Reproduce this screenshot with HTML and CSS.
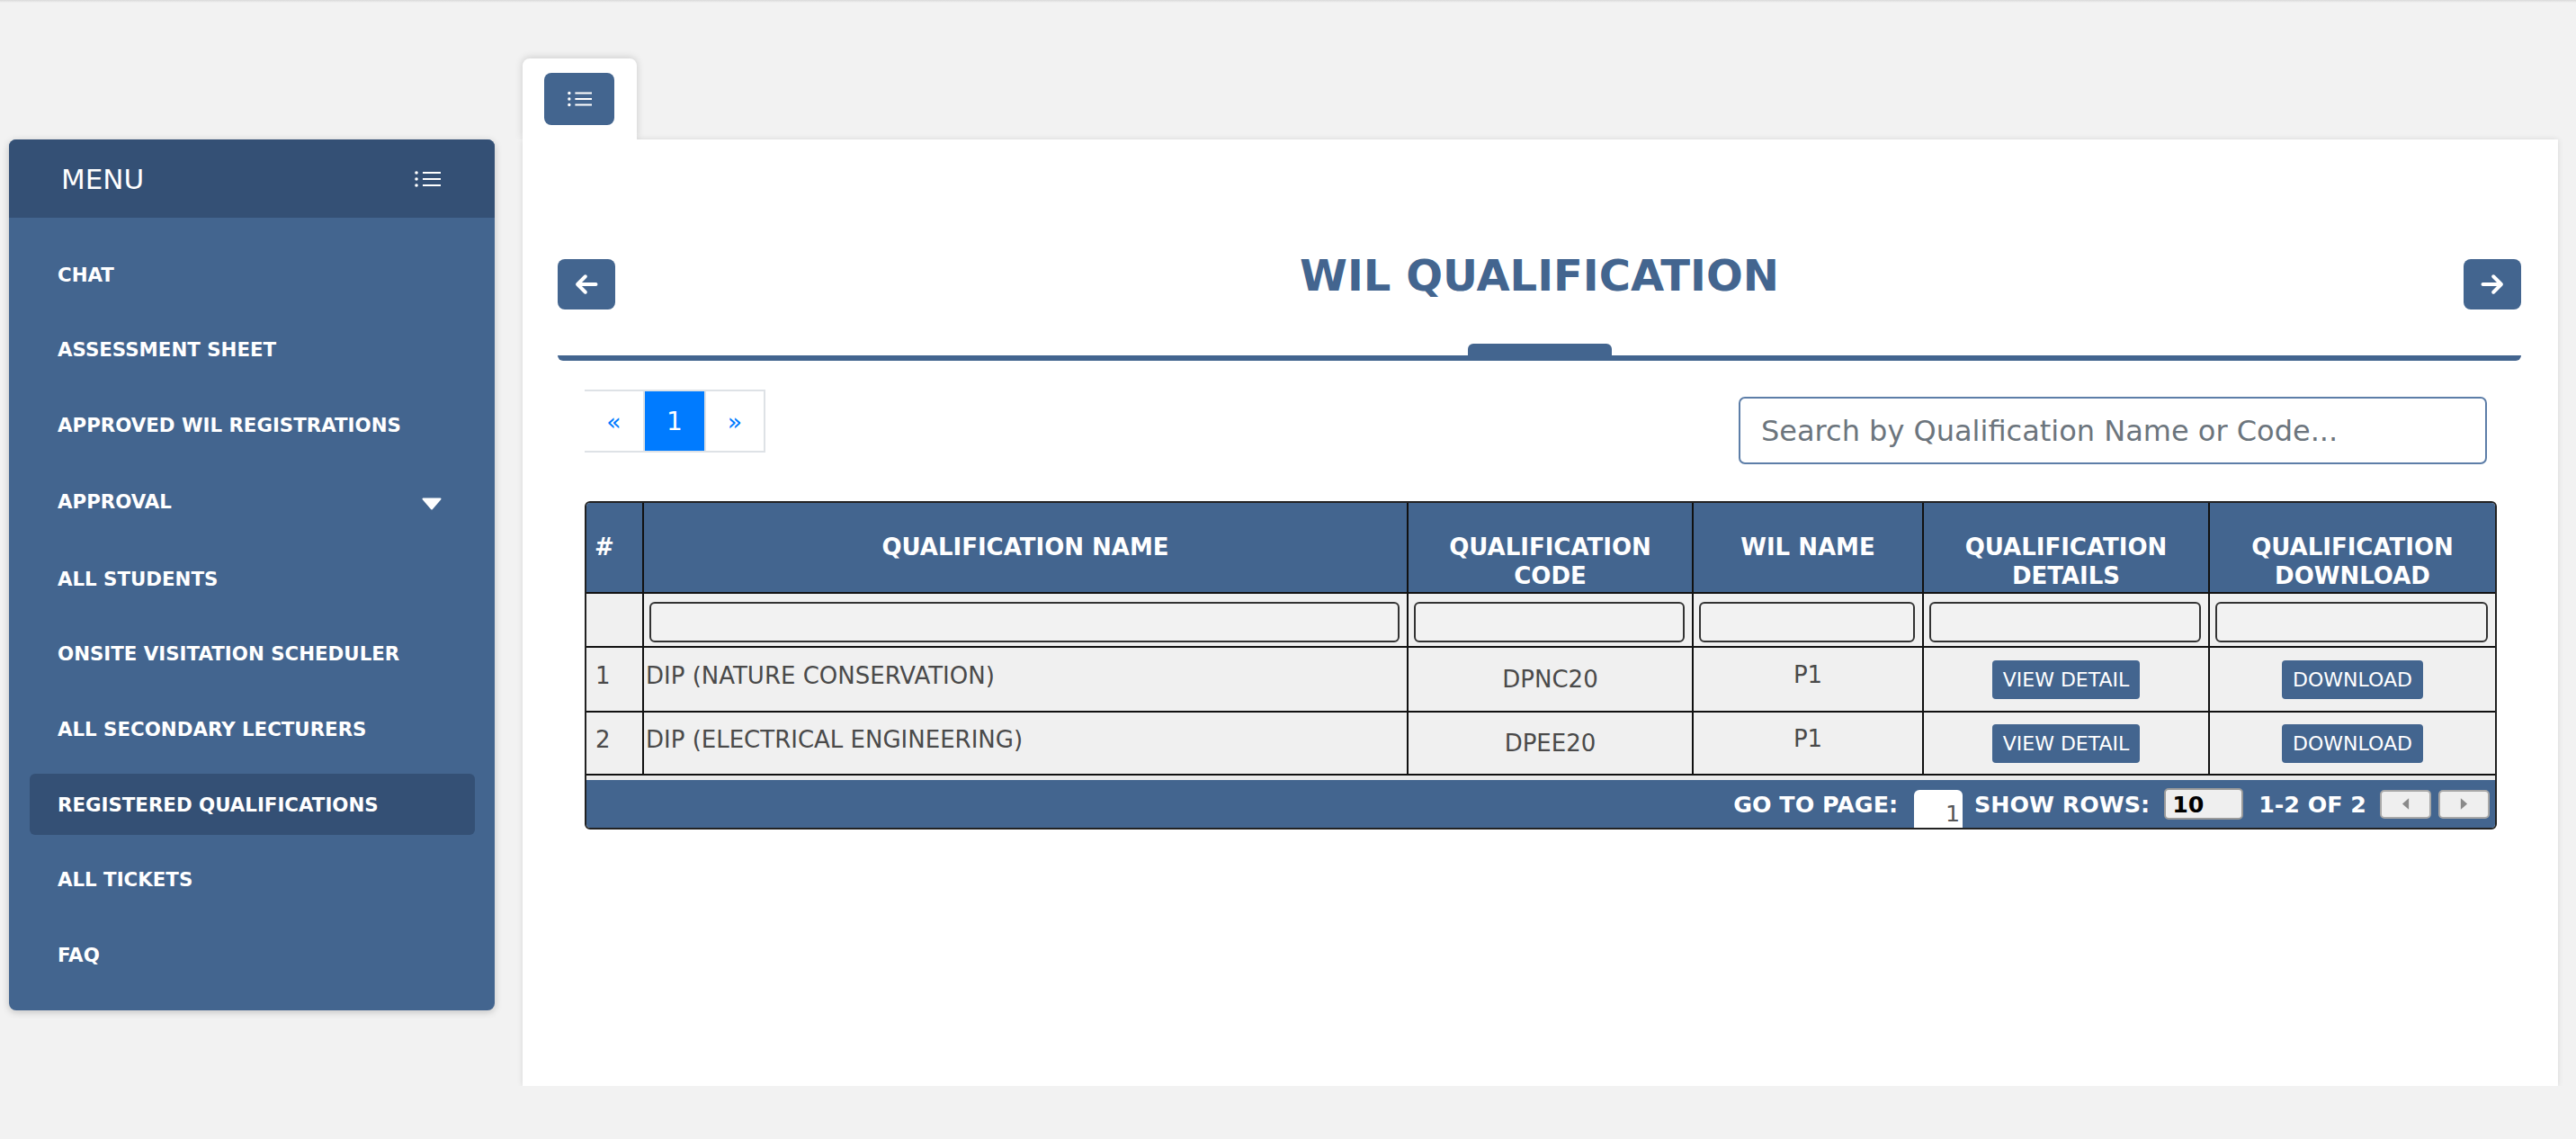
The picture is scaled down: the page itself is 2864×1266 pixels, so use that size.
FILE: index.html
```html
<!DOCTYPE html>
<html lang="en">
<head>
<meta charset="utf-8">
<title>WIL Qualification</title>
<link rel="stylesheet" href="styles.css">
</head>
<body>
<div class="topbar"></div>
<div class="layout">
  <aside class="sidebar">
    <div class="side-head">
      <span class="side-title">MENU</span>
      <svg class="list-icon" viewBox="0 0 29 18"><g fill="#fff"><circle cx="2" cy="2" r="1.8"/><circle cx="2" cy="9" r="1.8"/><circle cx="2" cy="16" r="1.8"/></g><path d="M9 2h20M9 9h20M9 16h20" stroke="#fff" stroke-width="2"/></svg>
    </div>
    <nav class="side-nav">
      <a class="nav-item">CHAT</a>
      <a class="nav-item">ASSESSMENT SHEET</a>
      <a class="nav-item">APPROVED WIL REGISTRATIONS</a>
      <a class="nav-item nav-item--drop">APPROVAL<svg class="caret" viewBox="0 0 24 14"><path d="M2.5 1.5h19L12 12.5z" fill="#fff" stroke="#fff" stroke-width="2" stroke-linejoin="round"/></svg></a>
      <a class="nav-item">ALL STUDENTS</a>
      <a class="nav-item">ONSITE VISITATION SCHEDULER</a>
      <a class="nav-item">ALL SECONDARY LECTURERS</a>
      <a class="nav-item is-active">REGISTERED QUALIFICATIONS</a>
      <a class="nav-item">ALL TICKETS</a>
      <a class="nav-item">FAQ</a>
    </nav>
  </aside>

  <main class="main">
    <div class="tab">
      <button class="tab-btn" type="button"><svg viewBox="0 0 29 18"><g fill="#fff"><circle cx="2" cy="2" r="1.8"/><circle cx="2" cy="9" r="1.8"/><circle cx="2" cy="16" r="1.8"/></g><path d="M9 2h20M9 9h20M9 16h20" stroke="#fff" stroke-width="2"/></svg></button>
    </div>
    <section class="card">
      <div class="title-row">
        <button class="nav-btn" type="button"><svg viewBox="0 0 24 24"><path d="M21 12H4M11 4.5 3.5 12 11 19.5" fill="none" stroke="#fff" stroke-width="3.4" stroke-linecap="round" stroke-linejoin="round"/></svg></button>
        <h1 class="title">WIL QUALIFICATION</h1>
        <button class="nav-btn" type="button"><svg viewBox="0 0 24 24"><path d="M3 12h17M13 4.5 20.5 12 13 19.5" fill="none" stroke="#fff" stroke-width="3.4" stroke-linecap="round" stroke-linejoin="round"/></svg></button>
      </div>
      <div class="divider"><span class="divider-tab"></span></div>

      <div class="content">
        <div class="toolbar">
          <ul class="pagination">
            <li class="page page--first">&laquo;</li>
            <li class="page page--active">1</li>
            <li class="page page--last">&raquo;</li>
          </ul>
          <input class="search" type="text" placeholder="Search by Qualification Name or Code...">
        </div>

        <div class="table-wrap">
          <table class="grid">
            <thead>
              <tr class="row-head">
                <th class="col-num">#</th>
                <th class="col-name">QUALIFICATION NAME</th>
                <th class="col-code">QUALIFICATION CODE</th>
                <th class="col-wil">WIL NAME</th>
                <th class="col-details">QUALIFICATION DETAILS</th>
                <th class="col-download">QUALIFICATION DOWNLOAD</th>
              </tr>
              <tr class="row-filter">
                <td></td>
                <td><span class="filter-input"></span></td>
                <td><span class="filter-input"></span></td>
                <td><span class="filter-input"></span></td>
                <td><span class="filter-input"></span></td>
                <td><span class="filter-input"></span></td>
              </tr>
            </thead>
            <tbody>
              <tr class="row-1">
                <td class="cell-num">1</td>
                <td class="cell-name">DIP (NATURE CONSERVATION)</td>
                <td class="cell-center">DPNC20</td>
                <td class="cell-center cell-wil">P1</td>
                <td class="cell-center"><button class="btn" type="button">VIEW DETAIL</button></td>
                <td class="cell-center"><button class="btn" type="button">DOWNLOAD</button></td>
              </tr>
              <tr class="row-2">
                <td class="cell-num">2</td>
                <td class="cell-name">DIP (ELECTRICAL ENGINEERING)</td>
                <td class="cell-center">DPEE20</td>
                <td class="cell-center cell-wil">P1</td>
                <td class="cell-center"><button class="btn" type="button">VIEW DETAIL</button></td>
                <td class="cell-center"><button class="btn" type="button">DOWNLOAD</button></td>
              </tr>
            </tbody>
          </table>
          <div class="table-footer">
            <span class="f-label">GO TO PAGE:</span>
            <span class="page-box">1</span>
            <span class="f-label">SHOW ROWS:</span>
            <span class="rows-select">10</span>
            <span class="f-label">1-2 OF 2</span>
            <span class="pg-btn pg-btn--prev"><svg viewBox="0 0 10 16"><path d="M9 1 1 8l8 7z" fill="#8a8a8a"/></svg></span>
            <span class="pg-btn pg-btn--next"><svg viewBox="0 0 10 16"><path d="M1 1l8 7-8 7z" fill="#8a8a8a"/></svg></span>
          </div>
        </div>
      </div>
    </section>
  </main>
</div>
</body>
</html>
```

FILE: styles.css
```css
* { box-sizing: border-box; }

body {
  margin: 0;
  background: #f2f2f2;
  font-family: "DejaVu Sans", "Liberation Sans", sans-serif;
}

.topbar {
  height: 3px;
  background: linear-gradient(#d9d9d9, #f2f2f2);
}

.layout {
  display: flex;
  align-items: flex-start;
  padding-left: 10px;
}

/* ---------- Sidebar ---------- */
.sidebar {
  width: 540px;
  margin-top: 152px;
  background: #43658f;
  border-radius: 8px;
  box-shadow: 0 2px 8px rgba(0, 0, 0, 0.2);
  overflow: hidden;
}

.side-head {
  height: 87px;
  background: #345075;
  display: flex;
  align-items: center;
  justify-content: space-between;
  padding: 0 60px 0 58px;
  color: #fff;
}

.side-title { font-size: 31px; }

.list-icon { width: 29px; height: 18px; }

.side-nav {
  display: flex;
  flex-direction: column;
  gap: 15.6px;
  padding: 29px 22px 28px 23px;
}

.nav-item {
  height: 68px;
  display: flex;
  align-items: center;
  padding-left: 31px;
  color: #fff;
  font-weight: bold;
  font-size: 21.33px;
  text-decoration: none;
  border-radius: 6px;
}

.nav-item--drop { height: 72px; }

.caret {
  width: 24px;
  height: 14px;
  margin-left: auto;
  margin-right: 36px;
  margin-top: 4px;
}

.is-active { background: #345075; }

/* ---------- Main ---------- */
.main {
  width: 2263px;
  margin-left: 31px;
  padding-top: 62px;
}

.tab {
  position: relative;
  z-index: 1;
  width: 127px;
  height: 90px;
  background: #fff;
  border-radius: 8px 8px 0 0;
  box-shadow: 0 -1px 9px rgba(0, 0, 0, 0.16);
  clip-path: inset(-20px -20px 0 -20px);
  padding: 16px 0 0 24px;
}

.tab-btn {
  width: 78px;
  height: 58px;
  border: 0;
  border-radius: 8px;
  background: #43658f;
  display: flex;
  align-items: center;
  justify-content: center;
  padding: 0;
}

.tab-btn svg { width: 27px; height: 18px; }

.card {
  height: 1052px;
  background: #fff;
  box-shadow: 0 0 6px rgba(0, 0, 0, 0.12);
  padding: 133px 41px 0 39px;
}

.title-row {
  display: flex;
  justify-content: space-between;
  align-items: flex-start;
}

.nav-btn {
  width: 64px;
  height: 56px;
  border: 0;
  border-radius: 8px;
  background: #43658f;
  display: flex;
  align-items: center;
  justify-content: center;
  padding: 0;
}

.nav-btn svg { width: 28px; height: 28px; }

.title {
  margin: 0;
  font-size: 48px;
  line-height: 36px;
  font-weight: bold;
  color: #43658f;
}

.divider {
  margin-top: 38px;
  display: flex;
  justify-content: center;
  border-bottom: 6px solid #43658f;
  border-radius: 0 0 6px 6px;
}

.divider-tab {
  width: 160px;
  height: 13px;
  background: #43658f;
  border-radius: 6px 6px 0 0;
}

.content { margin: 32px 27px 0 30px; }

.toolbar {
  display: flex;
  justify-content: space-between;
  align-items: flex-start;
}

.pagination {
  display: flex;
  list-style: none;
  margin: 0;
  padding: 0;
}

.page {
  height: 70px;
  display: flex;
  align-items: center;
  justify-content: center;
  border-top: 2px solid #dee2e6;
  border-bottom: 2px solid #dee2e6;
  color: #007bff;
  font-size: 26.67px;
  background: #fff;
}

.page--first { width: 67px; border-right: 2px solid #dee2e6; }
.page--last { width: 68px; border-left: 2px solid #dee2e6; border-right: 2px solid #dee2e6; }
.page--active { width: 66px; background: #007bff; color: #fff; font-size: 28px; }

.search {
  width: 832px;
  height: 75px;
  margin-top: 8px;
  margin-right: 11px;
  border: 2px solid #5d7ea8;
  border-radius: 7px;
  padding: 0 23px;
  font-family: inherit;
  font-size: 32px;
  color: #333;
  background: #fff;
}

.search::placeholder { color: #6c757d; }

/* ---------- Table ---------- */
.table-wrap {
  margin-top: 41px;
  border: 2px solid #222;
  border-radius: 6px;
  overflow: hidden;
  background: #ebebeb;
}

.grid {
  width: 100%;
  border-collapse: separate;
  border-spacing: 0;
  table-layout: fixed;
}

.grid th,
.grid td {
  border-right: 2px solid #111;
  border-bottom: 2px solid #111;
}

.grid th:last-child,
.grid td:last-child { border-right: 0; }

.grid th {
  background: #43658f;
  color: #fff;
  font-size: 26px;
  line-height: 32px;
  font-weight: bold;
  text-align: center;
  vertical-align: top;
  padding: 33px 10px 0;
}

.col-num { width: 64px; text-align: left !important; padding-left: 9px !important; }
.col-name { width: 850px; }
.col-code { width: 317px; }
.col-wil { width: 256px; }
.col-details { width: 318px; }

.row-head { height: 101px; }
.row-filter { height: 60px; }
.row-1 { height: 72px; }
.row-2 { height: 70px; }

.grid td {
  background: #f0f0f0;
  color: #4a4a4a;
  font-size: 26px;
  vertical-align: middle;
  padding: 0;
}

.row-filter td {
  vertical-align: top;
  padding: 9px 8px 0 6px;
}

.filter-input {
  display: block;
  height: 45px;
  border: 2px solid #333;
  border-radius: 6px;
  background: #f2f2f2;
}

.cell-num { padding: 0 0 8px 10px !important; }
.cell-name { padding: 0 0 8px 2px !important; }
.cell-center { text-align: center; }
.cell-wil { padding-bottom: 10px !important; }

.btn {
  height: 43px;
  padding: 0 12px;
  border: 0;
  border-radius: 4px;
  background: #43658f;
  color: #fff;
  font-family: inherit;
  font-size: 22px;
  vertical-align: middle;
}

.table-footer {
  margin-top: 5px;
  height: 53px;
  background: #43658f;
  display: flex;
  align-items: center;
  justify-content: flex-end;
  padding-right: 6px;
  color: #fff;
  font-weight: bold;
  font-size: 25.33px;
  white-space: nowrap;
}

.page-box {
  align-self: flex-end;
  width: 54px;
  height: 42px;
  margin: 0 13px 0 18px;
  padding: 16px 3px 0 0;
  line-height: 20px;
  background: #fff;
  border-radius: 6px 6px 0 0;
  color: #555;
  font-weight: normal;
  text-align: right;
}

.rows-select {
  width: 88px;
  height: 35px;
  margin: 0 17px 0 16px;
  padding-left: 7px;
  display: flex;
  align-items: center;
  border: 2px solid #9a9a9a;
  border-radius: 5px;
  background: #efefef;
  color: #000;
}

.pg-btn {
  width: 57px;
  height: 32px;
  display: flex;
  align-items: center;
  justify-content: center;
  border: 2px solid #a8a8a8;
  border-radius: 5px;
  background: #efefef;
}

.pg-btn--prev { margin-left: 15px; }
.pg-btn--next { margin-left: 8px; }

.pg-btn svg { width: 9px; height: 15px; }
```
